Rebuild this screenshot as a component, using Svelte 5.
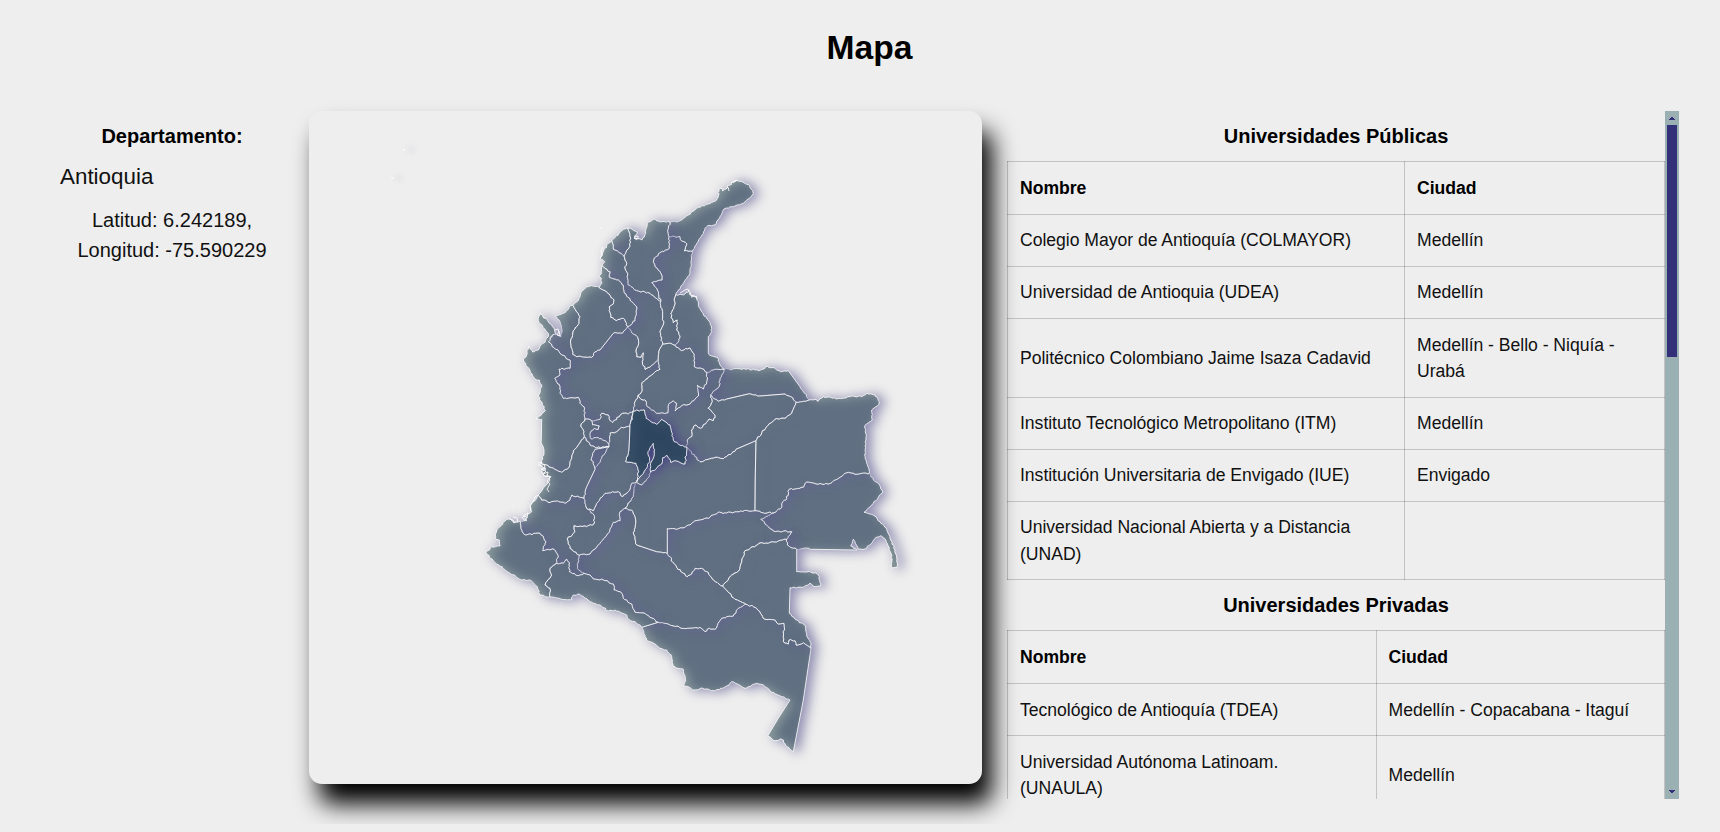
<script>
  // Border lines, stored per survey sheet at three units per map unit.
  const sheets = {
    A: [560, 160],
    B: [480, 290],
    C: [660, 340],
    D: [470, 460],
    E: [640, 480],
    F: [600, 580]
  };

  const lines = {
    // outer outline
    guajiraCoast: 'A 330,186 350,186 365,180 385,165 410,145 445,132 468,122 475,108 476,85 486,84 488,93 497,88 503,76 515,73 518,64 530,62 548,66 566,74 574,88 580,101 572,112 555,126 525,138 492,147 480,170 465,195 440,200 420,235 397,274',
    cesarVen: 'A 397,274 393,310 390,340 370,370 355,390 347,404',
    norteVen: 'A 347,404 375,402 387,392 395,412 410,408 416,440 430,462 450,487 455,515 445,530 445,580 455,588 472,592 480,615 492,628',
    araucaVen: 'C 192,88 240,86 285,90 302,90 322,79 345,85 362,95 385,92 420,140 448,180',
    vichadaVen: 'C 448,180 465,178 472,184 490,170 530,177 570,170 605,170 620,160 645,165 658,185 652,198 635,210 637,240 615,256 618,300 614,345 624,380 628,400',
    guainiaVen: 'C 628,400 640,420 655,430 668,458 640,490 612,517 640,525 660,545 680,565 692,600 705,630 712,670 711,682 696,684 693,640 682,610 665,588 645,595 620,625 595,628 585,605 580,598 572,618 590,630 455,628 440,624 410,628',
    vaupesBra: 'E 470,208 470,275 500,276 525,278 538,290 542,318 525,320 510,310 490,322 450,323 448,400 470,420 495,436 500,465 512,488 513,505',
    amazonasSouth: 'F 633,205 610,360 580,515 562,500 545,478 522,482 503,468 535,415 570,360 545,350 510,333 490,315 470,310 435,325 412,312 395,305 380,318 345,333 308,325 280,330 265,320 252,318 256,295 250,268 235,265 218,258 215,230 200,210 180,205 165,192 140,182 127,143',
    putumayoSouth: 'D 515,502 495,485 472,475 470,465 435,450 415,453 390,435 370,430 330,403 310,405 305,420 275,418 240,411',
    narinoCoast: 'D 240,411 210,405 202,380 180,360 155,360 120,340 80,312 48,278 65,260 90,258 88,240 76,235 80,212 105,183 120,175 132,188 150,183',
    caucaCoast: 'D 150,183 170,182 163,170 185,155 180,138 190,125 205,105',
    valleCoast: 'D 205,105 220,85 235,68 243,50 225,48 213,35 228,27 205,15 215,10',
    chocoCoast: 'B 185,520 192,490 184,450 185,388 168,387 196,362 175,318 185,290 178,270 165,268 150,242 130,210 140,195 145,168 158,186 178,175 205,140 203,128 175,92 180,70 205,95 222,115 228,132 215,137 205,155',
    antioquiaCoast: 'B 205,155 222,128 243,140 246,125 240,95 226,78 250,70 278,45',
    cordobaCoast: 'A 38,435 55,422 62,400 80,380 98,378 118,383',
    sucreCoast: 'A 118,383 126,370 124,355 116,350 124,340 127,318',
    bolivarCoast: 'A 127,318 134,305 120,295 130,275 140,255 155,243',
    atlanticoCoast: 'A 155,243 165,233 185,212 203,204',
    magdalenaCoast: 'A 203,204 232,216 224,235 246,240 257,220 265,186 280,178 300,186 330,186',
    // inner borders
    guaMag: 'A 330,186 323,215 327,230',
    guaCes: 'A 327,230 360,230 365,243 381,252 372,272 397,274',
    magCes: 'A 327,230 328,265 300,278 281,300 285,320 305,345 306,360 275,368 290,385 302,425',
    atlMag: 'A 203,204 212,235 208,262 192,288',
    atlBol: 'A 155,243 160,268 178,278 192,288',
    bolMag: 'A 192,288 200,310 195,320 203,345 205,375 235,393 270,400 302,425',
    sucBol: 'A 127,318 150,335 148,352 175,360 190,376 192,398 215,425 230,440 225,482 203,500',
    sucCor: 'A 118,383 140,395 162,420 160,432 148,440 152,472 170,482 190,475 203,500',
    corAnt: 'A 38,435 60,470 57,490 40,512 32,550 38,583 50,590 95,592 105,575 120,570 160,520 190,517 203,500',
    antBol: 'A 203,500 215,518 232,530 236,550 228,573 230,590 243,592 250,578 247,605 255,628 275,616 295,598',
    bolCes: 'A 302,425 308,470 311,490 300,515 308,552',
    bolSan: 'A 308,552 298,570 295,598',
    cesSan: 'A 308,552 328,550 345,556',
    cesNor: 'A 347,404 342,440 332,462 340,488 352,480 350,510 360,528 353,548 345,556',
    norSan: 'C 45,16 65,32 90,24 103,45 103,80 120,84 140,97',
    norBoy: 'C 140,97 160,90 175,88 192,88',
    boyAra: 'C 192,88 180,120 177,140 152,165',
    araCas: 'C 152,165 173,183 200,177 265,162 300,168 375,162 392,170 408,187',
    araVic: 'C 408,187 430,184 448,180',
    casVic: 'C 408,187 395,220 375,235 345,238 320,260 288,302',
    casMet: 'C 288,302 235,325 190,356 165,352 120,365 105,350 80,322',
    boyCas: 'C 152,165 157,185 145,205 165,225 160,242 148,237 122,265 105,255 95,270 95,290 82,300 80,322',
    sanBoy: 'C 140,97 140,125 130,147 112,135 115,168 90,192 65,197 45,213 50,190 40,182 28,190 24,218 -10,220 -38,200 -42,183 -57,178 -65,165',
    antSan: 'B 535,208 540,238 515,255 487,277 487,300 475,315',
    antBoy: 'B 475,315 465,335 460,363',
    boyCun: 'B 460,363 493,360 498,385 530,403 545,388 570,405 580,450 598,465 620,472',
    cunMet: 'B 620,472 615,522 590,513 572,517 562,497 548,503 545,522 512,547',
    bogEast: 'B 512,547 512,520 523,490 520,460',
    bogWest: 'B 520,460 504,485 510,515 492,545 470,575',
    bogMet: 'B 512,547 500,568 485,585 470,575',
    cunTol: 'B 460,363 450,410 447,480 437,515 468,520 476,545 470,575',
    calAnt: 'B 460,363 445,372 428,370 418,380 398,398 390,392 385,375 365,370 360,388 335,392',
    risAnt: 'B 335,392 315,387',
    choAnt: 'B 205,155 240,190 270,210 270,235 237,237 240,255 224,265 240,290 240,310 250,325 295,322 300,340 312,350 315,387',
    calRis: 'B 335,392 338,405 358,408 355,418 343,415 330,430 333,447 355,443 375,452 387,465',
    risChoco: 'B 315,387 302,408 312,425 313,440',
    risVal: 'B 313,440 330,465 350,473 387,470',
    choVal: 'B 313,440 280,482 275,505 265,535 245,547 215,533 185,520',
    calTol: 'B 387,465 390,430 410,425 425,412 450,410',
    calCun: 'B 450,410 460,363',
    quiVal: 'B 345,478 338,490 333,510 340,515 345,538',
    quiTol: 'B 387,470 365,505 345,538',
    valTol: 'D 375,28 350,80 342,115',
    valCau: 'D 342,115 305,105 300,120 285,130 262,122 240,128 215,120 205,105',
    cauTol: 'D 342,115 350,145',
    huiTol: 'D 350,145 370,152 385,125 405,100 445,95 458,110 475,95 485,70 500,65',
    cauHui: 'D 350,145 372,165 372,192 350,200 312,197 315,215 292,238 300,265 328,285',
    huiMet: 'D 500,65 492,90 490,110 465,145',
    huiCaq: 'D 465,145 450,155 450,182 430,187 415,220 385,255 360,282 328,285',
    metCaq: 'D 465,145 485,150 495,170 497,190 490,218 500,255 560,275 592,280',
    metGua: 'E 82,220 82,145 115,146 150,135 165,122 205,115 235,97 250,100 290,95 345,92',
    guaVic: 'E 345,92 370,98 402,98',
    metVic: 'C 288,302 286,407 285,512',
    guaGui: 'E 402,98 362,118 400,153 455,155 440,178',
    vicGui: 'E 402,98 425,82 428,65 440,56 447,28 490,22 500,6 545,12 565,12 600,-8 625,-23 645,-17 688,-20',
    guaVau: 'E 440,178 385,190 365,188 315,212 305,240 298,270 275,285 248,318',
    guaCaq: 'E 82,220 110,262 142,290 155,282 165,265 185,265 205,277 220,300 248,318',
    vauCaq: 'E 248,318 285,358 318,373',
    vauGui: 'E 440,178 442,195 470,208',
    caqAma: 'E 318,373 295,385 280,408 245,415 225,448 208,445 195,455 180,442 130,445 85,432 55,427',
    caqPut: 'D 342,340 360,345 370,357 400,360 430,372 432,390 455,400 460,415 485,432 495,457 525,460 565,487',
    putAma: 'D 565,487 515,502',
    vauAma: 'E 318,373 345,382 360,395 370,415 405,420 415,432 432,430 430,485 445,492 447,480 465,482 468,495 490,488 513,505',
    putNar: 'D 240,411 240,385 225,375 245,345 240,325 258,310',
    cauNar: 'D 150,183 155,210 165,225 210,220 228,245 218,272 252,268 265,290 258,310',
    cauPut: 'D 258,310 280,310 290,298 298,308 298,335 325,347 342,340',
    cauCaq: 'D 328,285 322,325 342,340'
  };

  const straight = new Set(['metVic', 'putAma']);

  let seed = 11;
  const rnd = () => {
    seed = (seed * 16807) % 2147483647;
    return seed / 2147483647 - 0.5;
  };

  function trace(name, text) {
    const [sheet, ...rest] = text.split(' ');
    const [ox, oy] = sheets[sheet];
    const pts = rest.map((p) => p.split(',').map(Number)).map(([x, y]) => [ox + x / 3, oy + y / 3]);
    const out = [pts[0]];
    for (let i = 1; i < pts.length; i++) {
      const [x0, y0] = pts[i - 1];
      const [x1, y1] = pts[i];
      const d = Math.hypot(x1 - x0, y1 - y0);
      const even = straight.has(name) || d > 19 || (x0 === x1 && d > 14);
      const n = even ? 1 : Math.max(1, Math.round(d / 2));
      for (let k = 1; k < n; k++) {
        const t = k / n;
        out.push([x0 + (x1 - x0) * t + rnd() * 1.5, y0 + (y1 - y0) * t + rnd() * 1.5]);
      }
      out.push([x1, y1]);
    }
    return out;
  }

  const traced = Object.fromEntries(Object.entries(lines).map(([k, v]) => [k, trace(k, v)]));
  const dist = (a, b) => Math.hypot(a[0] - b[0], a[1] - b[1]);

  function shape(names) {
    const parts = names.split(' ').map((n) => traced[n]);
    let first = parts[0];
    const nextEnds = [parts[1][0], parts[1][parts[1].length - 1]];
    const gap = (p) => Math.min(...nextEnds.map((e) => dist(p, e)));
    if (gap(first[0]) < gap(first[first.length - 1])) first = [...first].reverse();
    const all = [...first];
    for (const part of parts.slice(1)) {
      const end = all[all.length - 1];
      const flip = dist(part[part.length - 1], end) < dist(part[0], end);
      all.push(...(flip ? [...part].reverse() : part));
    }
    return 'M' + all.map(([x, y]) => x.toFixed(1) + ' ' + y.toFixed(1)).join('L') + 'Z';
  }

  const departments = [
    ['Amazonas', 'amazonasSouth putAma caqAma vauAma'],
    ['Antioquia', 'antioquiaCoast corAnt antBol antSan antBoy calAnt risAnt choAnt'],
    ['Arauca', 'araucaVen araVic araCas boyAra'],
    ['Atlántico', 'atlanticoCoast atlMag atlBol'],
    ['Bolívar', 'bolivarCoast atlBol bolMag bolCes bolSan antBol sucBol'],
    ['Boyacá', 'norBoy boyAra boyCas boyCun antBoy sanBoy'],
    ['Caldas', 'calAnt calRis calTol calCun'],
    ['Caquetá', 'metCaq guaCaq vauCaq caqAma caqPut cauCaq huiCaq'],
    ['Casanare', 'araCas casVic casMet boyCas'],
    ['Cauca', 'caucaCoast valCau cauTol cauHui cauCaq cauPut cauNar'],
    ['Cesar', 'guaCes cesarVen cesNor cesSan bolCes magCes'],
    ['Chocó', 'chocoCoast choAnt risChoco choVal'],
    ['Córdoba', 'cordobaCoast sucCor corAnt'],
    ['Guainía', 'guainiaVen vauGui guaGui vicGui'],
    ['Guaviare', 'guaVic guaGui guaVau guaCaq metGua'],
    ['Huila', 'huiTol huiMet huiCaq cauHui'],
    ['La Guajira', 'guajiraCoast guaCes guaMag'],
    ['Magdalena', 'magdalenaCoast guaMag magCes bolMag atlMag'],
    ['Meta', 'casMet metVic metGua metCaq huiMet bogMet cunMet'],
    ['Nariño', 'narinoCoast cauNar putNar'],
    ['Norte de Santander', 'norteVen norBoy norSan cesNor'],
    ['Putumayo', 'putumayoSouth putNar cauPut caqPut putAma'],
    ['Quindío', 'quiVal quiTol'],
    ['Risaralda', 'risAnt risChoco risVal calRis'],
    ['Santander', 'norSan sanBoy antSan bolSan cesSan'],
    ['Sucre', 'sucreCoast sucBol sucCor'],
    ['Tolima', 'calTol cunTol huiTol cauTol valTol quiTol'],
    ['Valle del Cauca', 'valleCoast choVal risVal quiVal valTol valCau'],
    ['Vaupés', 'vaupesBra vauAma vauCaq guaVau vauGui'],
    ['Vichada', 'vichadaVen vicGui guaVic metVic casVic araVic'],
    ['Bogotá', 'bogEast bogWest bogMet']
  ].map(([name, list]) => [name, shape(list)]);

  const cundinamarca = shape('boyCun cunMet bogEast bogWest cunTol');

  const publicas = [
    ['Colegio Mayor de Antioquía (COLMAYOR)', 'Medellín'],
    ['Universidad de Antioquia (UDEA)', 'Medellín'],
    ['Politécnico Colombiano Jaime Isaza Cadavid', 'Medellín - Bello - Niquía - Urabá'],
    ['Instituto Tecnológico Metropolitano (ITM)', 'Medellín'],
    ['Institución Universitaria de Envigado (IUE)', 'Envigado'],
    ['Universidad Nacional Abierta y a Distancia (UNAD)', '']
  ];
  const privadas = [
    ['Tecnológico de Antioquía (TDEA)', 'Medellín - Copacabana - Itaguí'],
    ['Universidad Autónoma Latinoam. (UNAULA)', 'Medellín']
  ];
</script>

{#snippet tabla(titulo, filas, clase)}
  <h2>{titulo}</h2>
  <table class={clase}>
    <thead>
      <tr><th class="nombre">Nombre</th><th>Ciudad</th></tr>
    </thead>
    <tbody>
      {#each filas as [nombre, ciudad]}
        <tr><td>{nombre}</td><td>{ciudad}</td></tr>
      {/each}
    </tbody>
  </table>
{/snippet}

<main>
  <h1>Mapa</h1>
  <div class="content">
    <section class="info">
      <h2>Departamento:</h2>
      <p class="name">Antioquia</p>
      <p class="coords">Latitud: 6.242189,<br />Longitud: -75.590229</p>
    </section>

    <section class="card">
      <svg viewBox="309 111 673 672">
        {#each departments as [name, d] (name)}
          <path class="dep" {d} />
        {/each}
        <path class="dep active" d={cundinamarca} />
        <path class="shoals" d="M555 330l3-1 1 3-2 3 3 1-1-5M634 237l4-1v3l-4-1 3 2M600 258l2-3-1-4 2-4M538 463l4-1-2 4 4-2 1 4-4 1 5 2-3 3 5-2-1 5-4-2M546 475l4 2-3 4 3 3-3 5 2 3M509 519l4 1 1 3 4-2-1-3-4-1M522 517l3 4 2-4-4-1 5-3-1 5M531 511l-1-5 3-4 2-5 3-2M731 183l4-2 2-1-4 3M600 228l2 0M512 507h1M726 189l2-2 1 4M680 293l5-3 3-1 2 6 5 1 2 3" />
        <path class="isle" d="M403.500 149h1.500v1.500h-1.500z" />
        <path class="isle" d="M391.500 177.500h1.500v1.500h-1.500z" />
      </svg>
    </section>

    <section class="lists">
      <div class="view">
        {@render tabla('Universidades Públicas', publicas, 'pub')}
        {@render tabla('Universidades Privadas', privadas, 'priv')}
      </div>
      <div class="bar">
        <svg class="arrow" viewBox="0 0 14 14"><path d="M4 9V8h1V7h1V6h2v1h1v1h1v1z" /></svg>
        <div class="thumb"></div>
        <svg class="arrow" viewBox="0 0 14 14"><path d="M4 5v1h1v1h1v1h2V7h1V6h1V5z" /></svg>
      </div>
    </section>
  </div>
</main>

<style>
  :global(body) {
    margin: 0;
    background: #eee;
    overflow: hidden;
  }
  main {
    box-sizing: border-box;
    width: 1720px;
    height: 832px;
    padding: 0 41px 8px 60px;
    overflow: hidden;
    font-family: 'Liberation Sans', Arial, sans-serif;
    color: #000;
    background: #eee;
  }
  h1 {
    margin: 0;
    height: 81px;
    font-size: 33.6px;
    line-height: 96px;
    text-align: center;
  }
  .content {
    display: grid;
    grid-template-columns: 224px 673px 672px;
    column-gap: 25px;
    align-items: start;
    height: 713px;
    margin: 0 -41px 0 -60px;
    padding: 30px 0 0 60px;
    overflow: hidden;
  }
  h2 {
    margin: 0;
    padding: 10px 0;
    font-size: 20px;
    line-height: 30px;
    text-align: center;
  }
  p {
    margin: 0;
    color: #111;
  }
  .name {
    margin-top: -1px;
    font-size: 22.4px;
    line-height: 33.6px;
  }
  .coords {
    margin-top: 11.4px;
    font-size: 20px;
    line-height: 30px;
    text-align: center;
  }
  .card {
    height: 672.500px;
    border-radius: 13px;
    background: #eee;
    box-shadow: 10px 20px 25px #000;
  }
  .card svg {
    display: block;
    width: 673px;
    height: 672px;
  }
  .dep {
    fill: darkslategray;
    fill-opacity: 0.5;
    stroke: rgba(255, 255, 255, 0.85);
    stroke-width: 0.95;
    filter: drop-shadow(5px 1px 6px #343078);
  }
  .active {
    fill: #29455a;
    fill-opacity: 0.87;
  }
  .shoals {
    fill: none;
    stroke: #fff;
    stroke-opacity: 0.85;
    stroke-width: 1;
  }
  .isle {
    fill: #fff;
    filter: drop-shadow(7px 0 3px #343078);
  }
  .lists {
    display: flex;
    height: 688px;
    overflow: hidden;
  }
  .view {
    width: 658px;
    height: 688px;
    overflow: hidden;
  }
  table {
    width: 658px;
    table-layout: fixed;
    border-collapse: collapse;
    font-size: 17.6px;
    line-height: 26.2px;
    letter-spacing: -0.03px;
    color: #111;
  }
  th,
  td {
    height: 26.2px;
    padding: 12.5px 12px;
    border: 1px solid rgba(0, 0, 0, 0.18);
    text-align: left;
  }
  th {
    padding: 13px 12px 12.5px;
    color: #000;
  }
  .pub .nombre {
    width: 372px;
  }
  .priv .nombre {
    width: 343.5px;
  }
  .bar {
    display: flex;
    flex-direction: column;
    align-items: center;
    width: 14px;
    background: #9ab0b2;
  }
  .arrow {
    width: 14px;
    height: 14px;
    fill: #332f78;
    shape-rendering: crispEdges;
  }
  .thumb {
    width: 10px;
    height: 232px;
    margin-bottom: auto;
    background: #332f78;
  }
</style>
